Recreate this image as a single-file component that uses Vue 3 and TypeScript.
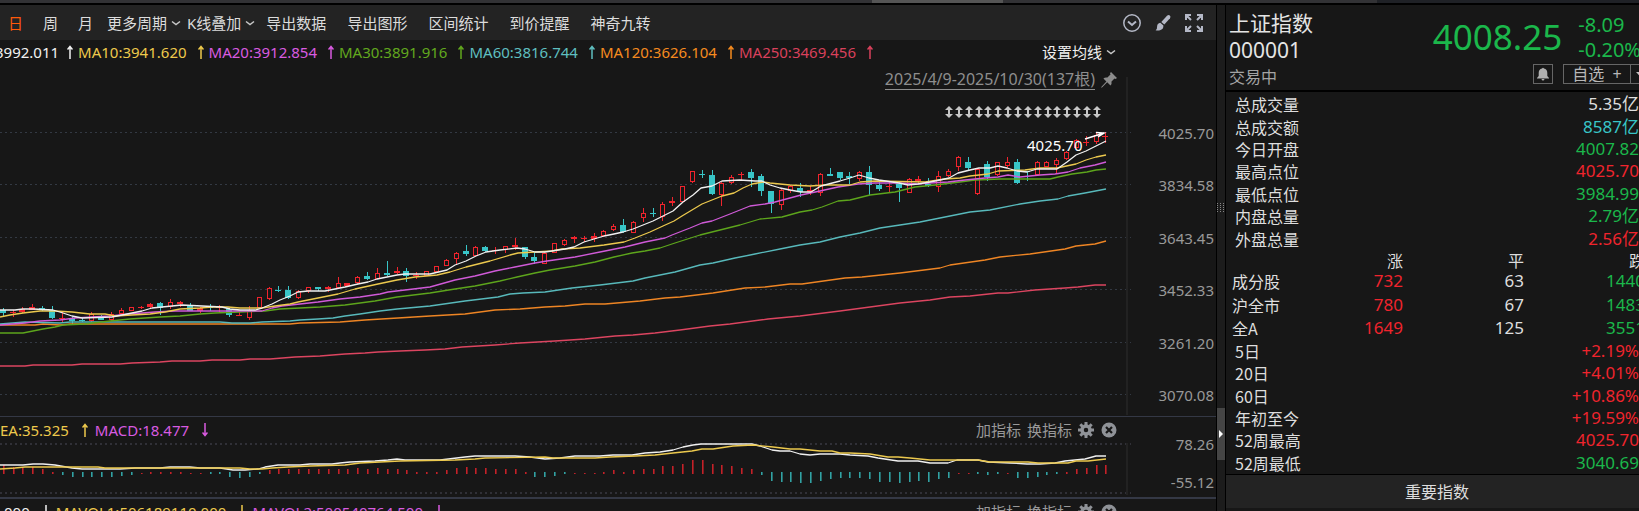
<script setup lang="ts">
import { computed } from 'vue'

type Candle = [kind: 'r' | 'g', top: number, bottom: number, high: number, low: number]
interface Reading { text: string; color: string; up: boolean }
interface Row { label: string; value: string; tone: string }

const periods = ['日', '周', '月']
const menus = ['更多周期', 'K线叠加']
const actions = ['导出数据', '导出图形', '区间统计', '到价提醒', '神奇九转']

const averages: Reading[] = [
  { text: '3992.011', color: '#f2f2f2', up: true },
  { text: 'MA10:3941.620', color: '#eec94c', up: true },
  { text: 'MA20:3912.854', color: '#d95be0', up: true },
  { text: 'MA30:3891.916', color: '#62a81e', up: true },
  { text: 'MA60:3816.744', color: '#5fbfc0', up: true },
  { text: 'MA120:3626.104', color: '#f58b1f', up: true },
  { text: 'MA250:3469.456', color: '#d9415c', up: true },
]
const macdReadings: Reading[] = [
  { text: 'DEA:35.325', color: '#eec94c', up: true },
  { text: 'MACD:18.477', color: '#d95be0', up: false },
]
const volumeReadings: Reading[] = [
  { text: '.000', color: '#f2f2f2', up: false },
  { text: 'MAVOL1:506189110.000', color: '#eec94c', up: false },
  { text: 'MAVOL2:500540764.500', color: '#d95be0', up: false },
]
const priceTicks = ['4025.70', '3834.58', '3643.45', '3452.33', '3261.20', '3070.08']
const gridLines = [133, 185, 238, 290, 343, 395]

const summary: Row[] = [
  { label: '总成交量', value: '5.35亿', tone: 'plain' },
  { label: '总成交额', value: '8587亿', tone: 'cyan' },
  { label: '今日开盘', value: '4007.82', tone: 'down' },
  { label: '最高点位', value: '4025.70', tone: 'up' },
  { label: '最低点位', value: '3984.99', tone: 'down' },
  { label: '内盘总量', value: '2.79亿', tone: 'down' },
  { label: '外盘总量', value: '2.56亿', tone: 'up' },
]
const breadth = [
  ['成分股', '732', '63', '1440'],
  ['沪全市', '780', '67', '1483'],
  ['全A', '1649', '125', '3551'],
]
const returns: Row[] = [
  { label: '5日', value: '+2.19%', tone: 'up' },
  { label: '20日', value: '+4.01%', tone: 'up' },
  { label: '60日', value: '+10.86%', tone: 'up' },
  { label: '年初至今', value: '+19.59%', tone: 'up' },
  { label: '52周最高', value: '4025.70', tone: 'up' },
  { label: '52周最低', value: '3040.69', tone: 'down' },
]

const candles: Candle[] = [
  ['g', 310, 313, 308, 316], ['r', 312, 313, 310, 317], ['r', 309, 312, 307, 313], ['r', 307, 310, 304, 310],
  ['g', 308, 310, 306, 311], ['g', 310, 318, 306, 319], ['r', 318, 319, 312, 323], ['g', 318, 321, 317, 324],
  ['g', 320, 321, 318, 322], ['r', 314, 321, 312, 322], ['g', 316, 320, 315, 320], ['r', 314, 320, 312, 321],
  ['r', 310, 314, 308, 314], ['r', 307, 311, 307, 311], ['r', 307, 308, 306, 309], ['r', 304, 307, 303, 308],
  ['g', 303, 308, 302, 315], ['r', 302, 307, 299, 309], ['r', 302, 304, 301, 307], ['g', 305, 311, 303, 311],
  ['r', 308, 311, 307, 313], ['g', 307, 308, 304, 311], ['r', 307, 308, 305, 313], ['g', 309, 315, 308, 317],
  ['r', 315, 316, 312, 316], ['r', 310, 318, 306, 320], ['r', 297, 308, 297, 308], ['r', 288, 299, 287, 300],
  ['g', 290, 291, 286, 292], ['g', 290, 298, 286, 299], ['r', 291, 298, 290, 299], ['r', 287, 291, 287, 293],
  ['g', 287, 289, 287, 291], ['r', 287, 289, 286, 292], ['r', 283, 288, 277, 289], ['r', 283, 286, 283, 286],
  ['r', 277, 283, 276, 284], ['g', 276, 279, 272, 280], ['r', 273, 279, 268, 279], ['g', 273, 275, 261, 276],
  ['r', 271, 273, 267, 274], ['g', 271, 276, 268, 282], ['r', 275, 276, 272, 279], ['r', 271, 276, 271, 276],
  ['r', 266, 272, 266, 272], ['r', 260, 266, 259, 266], ['r', 253, 259, 252, 264], ['g', 251, 254, 245, 256],
  ['r', 247, 256, 246, 256], ['g', 247, 251, 246, 252], ['r', 250, 251, 247, 254], ['r', 246, 250, 246, 253],
  ['r', 245, 247, 238, 250], ['g', 247, 257, 247, 259], ['g', 257, 261, 252, 264], ['r', 253, 264, 252, 264],
  ['r', 243, 253, 243, 253], ['r', 240, 245, 239, 246], ['r', 237, 239, 236, 243], ['r', 238, 239, 236, 242],
  ['r', 236, 239, 233, 242], ['r', 231, 236, 230, 237], ['r', 226, 230, 224, 231], ['g', 225, 232, 219, 233],
  ['r', 222, 233, 221, 233], ['r', 213, 218, 208, 222], ['g', 213, 214, 208, 217], ['r', 204, 217, 202, 221],
  ['r', 201, 203, 197, 206], ['r', 186, 202, 186, 202], ['r', 171, 182, 171, 183], ['g', 174, 175, 170, 178],
  ['g', 175, 194, 170, 195], ['r', 183, 195, 182, 206], ['r', 177, 183, 175, 184], ['r', 174, 175, 172, 180],
  ['g', 172, 178, 169, 187], ['g', 176, 191, 174, 196], ['g', 191, 204, 191, 213], ['r', 190, 205, 188, 210],
  ['r', 186, 191, 185, 193], ['g', 188, 192, 183, 197], ['r', 190, 192, 186, 195], ['r', 174, 193, 173, 196],
  ['g', 174, 176, 168, 176], ['g', 172, 178, 172, 180], ['g', 176, 178, 172, 184], ['r', 172, 179, 171, 181],
  ['g', 172, 185, 166, 195], ['g', 185, 189, 182, 191], ['r', 186, 187, 182, 193], ['g', 184, 188, 182, 202],
  ['r', 179, 193, 178, 193], ['r', 179, 181, 176, 183], ['g', 184, 186, 178, 187], ['r', 176, 187, 171, 192],
  ['r', 171, 176, 169, 177], ['r', 157, 167, 156, 171], ['g', 162, 168, 157, 171], ['r', 169, 194, 168, 195],
  ['g', 164, 177, 161, 181], ['r', 162, 175, 162, 176], ['r', 162, 166, 157, 168], ['g', 162, 183, 159, 184],
  ['g', 171, 172, 171, 181], ['r', 162, 175, 161, 175], ['r', 162, 167, 161, 167], ['r', 160, 165, 158, 174],
  ['r', 152, 159, 151, 160], ['r', 140, 148, 139, 149], ['r', 142, 143, 136, 146], ['r', 135, 142, 133, 144],
  ['r', 136, 137, 132, 143],
]

const histogram = [
  9, 7, 6, 7, 5, 2, -2, -4, -4, -4, -4, -4, -3, -2, 1, 2, 2, 2, 2, 1, 1, -1, -1, -4, -5, -4, -1, 4, 5, 5, 5, 5, 5, 5, 5, 5, 6, 5,
  6, 5, 5, 4, 2, 2, 2, 4, 6, 7, 6, 6, 5, 5, 5, 2, -4, -4, -3, -1, 1, 1, 1, 2, 4, 2, 4, 5, 5, 8, 8, 10, 14, 14, 10, 9, 8, 6, 5,
  -2, -8, -9, -9, -10, -10, -8, -6, -5, -5, -5, -6, -9, -9, -10, -9, -8, -9, -6, -5, 1, 1, -1, -2, -1, 1, -5, -5, -4, -2, -1, 2,
  5, 6, 9, 9,
]

const slotX = (i: number) => Math.round(2.8 + i * 9.845)
const bars = computed(() =>
  candles.map(([kind, top, bottom, high, low], i) => {
    const thin = bottom - top < 4
    return { kind, top, bottom, high, low, x: slotX(i), hollow: kind === 'r' && !thin }
  }),
)
const columns = computed(() =>
  histogram.map((v, i) => ({ x: slotX(i), y: v > 0 ? 475 - v : 473, h: Math.abs(v) + (v < 0 ? 1 : 0), kind: v > 0 ? 'r' : 'g' })),
)

const maLines = [
  { color: '#dc4560', points: '0,366 25,366 33,365 72,365 82,364 120,364 132,363 160,362 172,361 200,361 212,360 240,360 250,359 270,359 295,357 320,356 345,354 365,353 378,352 400,351 425,350 445,349 462,347 495,345 520,343 555,341 585,339 615,336 633,335 655,333 680,330 710,326 730,324 768,319 800,316 840,311 870,307 900,303 930,300 950,297 970,296 998,293 1008,293 1035,290 1065,288 1078,287 1095,285 1106,285' },
  { color: '#ee8524', points: '0,325 35,325 43,324 60,325 70,324 290,324 300,323 340,322 365,320 398,318 430,316 465,314 495,310 520,309 545,307 565,306 585,304 605,304 640,301 665,298 680,297 713,293 745,288 765,287 790,284 802,284 845,278 862,277 900,273 940,268 950,265 985,260 1000,257 1030,254 1065,249 1076,246 1095,244 1106,241' },
  { color: '#58b9bb', points: '0,324 25,322 60,323 70,322 220,322 232,323 250,323 262,322 290,321 300,320 318,319 333,318 345,316 360,314 380,311 397,309 408,308 430,306 465,301 498,297 510,294 523,293 545,292 572,288 600,285 633,281 645,278 675,272 700,265 713,263 735,258 755,254 780,249 800,245 820,242 840,237 860,233 880,228 900,225 920,222 950,216 970,212 990,210 1020,204 1040,201 1058,199 1068,196 1085,193 1106,189' },
  { color: '#5da51c', points: '0,333 23,333 33,331 43,329 55,327 63,325 85,324 110,321 130,319 145,318 160,317 180,316 200,314 215,313 240,312 265,311 280,309 300,308 320,307 345,305 375,301 397,297 430,293 455,289 475,286 500,281 517,277 535,273 550,270 575,266 595,262 614,257 632,253 645,251 660,248 675,243 700,235 720,230 740,225 760,219 782,217 800,212 812,210 822,207 838,201 850,200 870,195 895,192 915,187 935,185 960,182 975,180 1000,179 1050,179 1058,177 1072,174 1087,172 1096,170 1106,169' },
  { color: '#d05ad8', points: '0,325 25,323 40,321 60,320 75,318 92,317 110,316 130,314 155,312 175,311 262,311 272,308 282,306 300,304 318,302 340,299 360,297 380,294 388,292 405,290 430,287 455,280 475,276 495,271 515,267 535,263 547,261 575,257 600,252 625,247 645,242 665,238 672,235 690,228 702,223 712,221 730,214 750,206 765,204 775,202 790,198 801,195 820,191 838,187 858,184 875,183 900,183 918,184 930,183 948,182 965,180 985,178 998,177 1008,175 1020,177 1040,175 1055,174 1068,172 1080,168 1095,165 1106,162' },
  { color: '#ecc94e', points: '0,317 10,315 23,313 40,311 55,311 72,312 90,314 105,314 115,316 132,315 150,314 165,312 180,309 200,308 212,307 228,307 240,308 262,308 275,306 290,304 298,302 308,300 318,298 338,294 355,289 378,284 397,280 415,277 437,275 450,272 466,267 490,261 510,255 518,253 552,251 562,249 580,248 604,245 624,242 635,238 650,232 663,226 674,221 682,216 692,210 702,204 712,200 722,196 734,193 743,188 752,184 763,182 770,183 790,185 810,186 825,185 850,185 860,182 875,181 925,182 945,179 960,178 970,176 988,174 998,171 1025,170 1040,168 1057,168 1076,164 1086,160 1096,157 1106,155' },
  { color: '#f0f0f0', points: '0,310 15,310 23,309 33,309 53,310 63,313 72,316 82,318 112,317 122,315 142,311 152,308 172,306 182,305 202,306 222,307 230,309 240,310 255,310 262,308 272,304 280,300 290,296 298,292 308,291 325,291 335,289 345,287 358,284 368,282 377,279 387,277 397,275 405,274 430,274 447,270 455,265 466,261 476,256 486,252 500,250 517,248 525,249 535,252 545,252 565,249 574,247 584,242 594,239 604,236 614,234 623,232 633,229 643,225 653,221 663,216 673,211 683,202 693,195 701,188 712,186 722,181 740,180 755,181 762,181 770,185 780,188 790,190 801,192 811,192 821,186 840,181 850,178 859,175 869,178 879,180 899,183 908,185 918,184 930,182 940,180 949,178 958,173 970,170 979,168 990,168 998,166 1007,168 1017,171 1027,172 1037,169 1057,169 1067,162 1076,155 1086,151 1096,146 1106,141' },
]
const difPoints = '0,466 23,466 33,465 43,465 55,466 72,469 82,470 120,470 135,469 160,469 170,468 190,468 200,469 220,469 233,471 245,471 258,470 265,468 278,466 300,466 310,465 332,465 340,464 350,463 375,462 388,461 397,460 405,461 440,461 465,458 475,457 515,457 530,458 545,460 560,459 575,457 600,457 613,456 632,456 645,454 660,453 673,451 683,448 693,446 701,445 752,445 760,447 772,451 780,452 790,452 800,455 810,456 820,455 840,455 850,456 868,457 878,459 898,462 918,462 930,464 948,464 957,461 978,461 988,463 1010,464 1027,465 1040,465 1055,464 1065,462 1085,460 1096,457 1106,457'
const deaPoints = '0,470 15,469 25,468 98,468 105,469 240,469 250,470 262,470 272,469 288,468 310,467 345,466 360,464 380,463 400,462 455,461 475,460 485,459 545,458 553,459 595,459 610,458 635,457 655,456 673,454 692,452 702,450 713,450 733,447 753,446 773,448 790,450 800,450 820,452 832,452 840,454 850,454 870,455 888,458 898,458 910,459 930,461 978,461 990,463 1028,463 1038,464 1068,464 1076,462 1088,462 1106,460'
const marks = Array.from({ length: 16 }, (_, i) => Math.round(949 + i * 9.85))
</script>

<template>
  <div class="terminal">
    <div class="strip"><i class="strip-thumb"></i><i class="strip-end"></i></div>

    <div class="body">
      <main class="chart">
        <nav class="toolbar">
          <div class="periods">
            <button v-for="(p, i) in periods" :key="p" type="button" :class="{ active: i === 0 }">{{ p }}</button>
          </div>
          <div class="menus">
            <button v-for="m in menus" :key="m" type="button" aria-haspopup="menu">
              {{ m }}<svg class="chev" viewBox="0 0 10 6"><path d="M1 1.5 5 4.5 9 1.5" /></svg>
            </button>
          </div>
          <div class="actions">
            <button v-for="a in actions" :key="a" type="button">{{ a }}</button>
          </div>
          <div class="tools">
            <button type="button" aria-label="收起">
              <svg width="20" height="20" viewBox="0 0 20 20" fill="none" stroke="#b4b8c6" stroke-width="1.5"><circle cx="10" cy="10" r="8.2" /><path d="M6 8.5 10 12 14 8.5" stroke-width="2" /></svg>
            </button>
            <button type="button" aria-label="画线">
              <svg width="18" height="18" viewBox="0 0 18 18" fill="#b4b8c6"><path d="M13 1.8Q14.5.3 15.8 1.4T16 4.2L10.3 10.6 7.3 7.9Z" /><path d="M6.3 8.8 9.4 11.6Q9.6 15.5 6 16.3 3.5 16.9 1.6 16.2 3.3 15.3 3.1 12.6 3.2 9.2 6.3 8.8Z" /></svg>
            </button>
            <button type="button" aria-label="全屏">
              <svg width="20" height="20" viewBox="0 0 20 20" fill="none" stroke="#b4b8c6" stroke-width="2"><path d="M2 7V2H7M2 2 7 7M13 2H18V7M18 2 13 7M2 13V18H7M2 18 7 13M18 13V18H13M18 18 13 13" /></svg>
            </button>
          </div>
        </nav>

        <div class="legend averages">
          <span v-for="r in averages" :key="r.text" class="reading" :style="{ color: r.color }">
            {{ r.text }}<svg class="arrow" viewBox="0 0 6 14"><path d="M3 14V2M.5 4.5 3 1.5 5.5 4.5" /></svg>
          </span>
          <button type="button" class="settings" aria-haspopup="menu">
            设置均线<svg class="chev" viewBox="0 0 10 6"><path d="M1 1.5 5 4.5 9 1.5" /></svg>
          </button>
        </div>

        <section class="pane price">
          <div class="plot">
            <svg class="canvas" viewBox="0 66 1131 350" preserveAspectRatio="none">
              <path v-for="y in gridLines" :key="y" class="grid" :d="`M0 ${y - 0.5}H1131`" />
              <path class="rule" d="M1127 77V415" />
              <g v-for="(b, i) in bars" :key="i" :class="b.kind">
                <template v-if="b.hollow">
                  <rect :x="b.x" :y="b.high" width="1" :height="b.top - b.high" />
                  <rect :x="b.x" :y="b.bottom" width="1" :height="b.low - b.bottom" />
                  <rect class="hollow" :x="b.x - 1.5" :y="b.top + 0.5" width="4" :height="b.bottom - b.top - 1" />
                </template>
                <template v-else>
                  <rect :x="b.x" :y="b.high" width="1" :height="b.low - b.high" />
                  <rect :x="b.x - 3" :y="b.top" width="6" :height="b.bottom - b.top" />
                </template>
              </g>
              <polyline v-for="l in maLines" :key="l.color" class="line" :points="l.points" :stroke="l.color" />
              <path v-for="x in marks" :key="x" class="mark" :d="`M${x} 106 ${x + 4} 110H${x + 1}V114H${x + 4}L${x} 118 ${x - 4} 114H${x - 1}V110H${x - 4}Z`" />
              <text x="1027" y="151" class="peak">4025.70</text>
              <path class="pointer" d="M1085 139 1104 133M1096 132.500 1104 133 1098 137" />
            </svg>
            <div class="range">
              <a href="#range">2025/4/9-2025/10/30(137根)</a>
              <svg width="16" height="16" viewBox="0 0 16 16" fill="#8c8c8c"><path d="M10 0 16 6 14.500 7 13.500 6.500 10.500 9.500Q11 12 9.500 13.500L6.200 10.300 1 15.500.2 15.700.5 14.800 5.400 9.500 2.400 6.500Q4 5 6.400 5.500L9.500 2.500 9 1.200Z" /></svg>
            </div>
          </div>
          <div class="axis"><span v-for="t in priceTicks" :key="t">{{ t }}</span></div>
        </section>

        <section class="pane macd">
          <div class="plot">
            <div class="legend sub">
              <span v-for="r in macdReadings" :key="r.text" class="reading" :style="{ color: r.color }">
                {{ r.text }}<svg class="arrow" :class="{ flip: !r.up }" viewBox="0 0 6 14"><path d="M3 14V2M.5 4.5 3 1.5 5.500 4.5" /></svg>
              </span>
              <div class="pane-tools">
                <button type="button">加指标</button>
                <button type="button">换指标</button>
                <button type="button" aria-label="设置">
                  <svg width="16" height="16" viewBox="0 0 16 16"><circle cx="8" cy="8" r="4" fill="none" stroke="#8f9297" stroke-width="3.500" /><path d="M8 0V3M8 13V16M0 8H3M13 8H16M2.300 2.300 4.500 4.500M11.500 11.500 13.700 13.700M2.300 13.700 4.500 11.500M11.500 4.500 13.700 2.300" stroke="#8f9297" stroke-width="3" /></svg>
                </button>
                <button type="button" aria-label="关闭">
                  <svg width="16" height="16" viewBox="0 0 16 16"><circle cx="8" cy="8" r="7.500" fill="#8f9297" /><path d="M5 5 11 11M11 5 5 11" stroke="#171717" stroke-width="2.200" /></svg>
                </button>
              </div>
            </div>
            <svg class="canvas" viewBox="0 443 1131 55" preserveAspectRatio="none">
              <path class="grid faint" d="M0 445H1131M0 494H1131" />
              <path class="rule" d="M1127 444V496" />
              <rect v-for="(c, i) in columns" :key="i" :class="['col', c.kind]" :x="c.x" :y="c.y" width="1.600" :height="c.h" />
              <polyline class="line" :points="difPoints" stroke="#f0f0f0" />
              <polyline class="line" :points="deaPoints" stroke="#ecc94e" />
            </svg>
          </div>
          <div class="axis"><span>78.26</span><span>-55.12</span></div>
        </section>

        <section class="pane volume">
          <div class="plot">
            <div class="legend">
              <span v-for="r in volumeReadings" :key="r.text" class="reading" :style="{ color: r.color }">
                {{ r.text }}<svg class="arrow" :class="{ flip: !r.up }" viewBox="0 0 6 14"><path d="M3 14V2M.5 4.500 3 1.500 5.500 4.500" /></svg>
              </span>
              <div class="pane-tools">
                <button type="button">加指标</button>
                <button type="button">换指标</button>
                <button type="button" aria-label="设置">
                  <svg width="16" height="16" viewBox="0 0 16 16"><circle cx="8" cy="8" r="4" fill="none" stroke="#8f9297" stroke-width="3.500" /><path d="M8 0V3M8 13V16M0 8H3M13 8H16M2.300 2.300 4.500 4.500M11.500 11.500 13.700 13.700M2.300 13.700 4.500 11.500M11.500 4.500 13.700 2.300" stroke="#8f9297" stroke-width="3" /></svg>
                </button>
                <button type="button" aria-label="关闭">
                  <svg width="16" height="16" viewBox="0 0 16 16"><circle cx="8" cy="8" r="7.500" fill="#8f9297" /><path d="M5 5 11 11M11 5 5 11" stroke="#171717" stroke-width="2.200" /></svg>
                </button>
              </div>
            </div>
          </div>
          <div class="axis"></div>
        </section>
      </main>

      <div class="splitter">
        <svg class="grip" viewBox="0 0 7 10"><path d="M.5 0V10M3.500 0V10M6.500 0V10" /></svg>
        <button type="button" class="fold" aria-label="收起侧栏"><svg width="4" height="8" viewBox="0 0 4 8"><path d="M0 0 4 4 0 8Z" fill="#fff" /></svg></button>
      </div>

      <aside class="quote">
        <header class="head">
          <div class="identity">
            <h1>上证指数</h1>
            <span class="code">000001</span>
            <span class="status">交易中</span>
          </div>
          <div class="figures">
            <div class="last">
              <strong>4008.25</strong>
              <div class="change"><span>-8.09</span><span>-0.20%</span></div>
            </div>
            <div class="follow">
              <button type="button" class="bell" aria-label="提醒">
                <svg width="14" height="14" viewBox="0 0 14 14" fill="#b0b0b0"><path d="M6 1.500Q7 0 8 1.500 11.300 2.300 11.300 6V9L13 11V11.500H1V11L2.700 9V6Q2.700 2.300 6 1.500ZM5.500 12H8.500Q8.300 13.500 7 13.500T5.500 12Z" /></svg>
              </button>
              <button type="button" class="add">自选&nbsp; +</button>
              <button type="button" class="more" aria-label="更多"><svg width="9" height="5" viewBox="0 0 9 5"><path d="M0 0H9L4.500 5Z" fill="#c0c0c0" /></svg></button>
            </div>
          </div>
        </header>

        <div class="stats">
          <dl class="rows seven">
            <div v-for="r in summary" :key="r.label"><dt>{{ r.label }}</dt><dd :class="r.tone">{{ r.value }}</dd></div>
          </dl>
          <div class="breadth">
            <table>
              <thead><tr><th></th><th scope="col">涨</th><th scope="col">平</th><th scope="col">跌</th></tr></thead>
              <tbody>
                <tr v-for="b in breadth" :key="b[0]">
                  <th scope="row">{{ b[0] }}</th><td class="up">{{ b[1] }}</td><td>{{ b[2] }}</td><td class="down">{{ b[3] }}</td>
                </tr>
              </tbody>
            </table>
          </div>
          <dl class="rows six">
            <div v-for="r in returns" :key="r.label"><dt>{{ r.label }}</dt><dd :class="r.tone">{{ r.value }}</dd></div>
          </dl>
        </div>
        <button type="button" class="indices">重要指数</button>
      </aside>
    </div>
  </div>
</template>

<style>
body { margin: 0; background: #171717; }
</style>

<style scoped>
.terminal {
  display: flex;
  flex-direction: column;
  height: 100vh;
  overflow: hidden;
  background: #171717;
  color: #dcdcdc;
  font: 15px/20px "Noto Sans", "Noto Sans CJK SC", sans-serif;
}
button {
  margin: 0;
  padding: 0;
  border: 0;
  background: none;
  color: inherit;
  font: inherit;
  white-space: nowrap;
  cursor: pointer;
}
svg { display: block; flex: none; }

.strip { display: flex; height: 3px; background: #323235; border-bottom: 2px solid #000; flex: none; }
.strip-thumb { width: 8%; margin-left: 53.2%; background: #555; }
.strip-end { width: 16%; margin-left: auto; background: #1f2126; }
.body { display: flex; flex: 1; min-height: 0; }

.chart { flex: 1; min-width: 0; display: flex; flex-direction: column; }
.toolbar { display: flex; align-items: center; height: 35px; flex: none; padding: 0 12px 0 8px; background: #232323; }
.periods, .menus, .actions, .tools { display: flex; align-items: center; }
.periods { gap: 20px; }
.menus { gap: 6px; margin-left: 14px; }
.actions { gap: 21px; margin-left: 11px; }
.tools { gap: 12px; margin-left: auto; }
.active { color: #ff5a0a; }
.menus button, .settings { display: flex; align-items: center; gap: 4px; }
.chev { width: 10px; height: 6px; fill: none; stroke: #c8c8c8; stroke-width: 1.5; }

.legend { display: flex; align-items: center; height: 25px; flex: none; overflow: hidden; white-space: nowrap; }
.averages { height: 24px; padding: 0 100px 2px 0; }
.averages .reading:first-child { margin-left: -5px; }
.averages .reading:first-child .arrow { margin-left: 8px; }
.reading { display: flex; align-items: center; flex: none; padding-right: 5px; }
.arrow { width: 6px; height: 14px; margin-left: 11px; fill: none; stroke: currentColor; stroke-width: 1.5; }
.macd .reading, .volume .reading { padding-right: 7px; }
.macd .arrow, .volume .arrow { margin-left: 13px; }
.sub .reading:first-child { margin-left: -11px; }
.flip { transform: rotate(180deg); }
.settings { margin-left: auto; color: #f0f0f0; }

.pane { display: flex; flex: none; }
.plot { position: relative; flex: 1; min-width: 0; }
.canvas { width: 100%; }
.price { border-bottom: 1px solid #343845; }
.price .canvas { height: 350px; }
.macd { border-bottom: 2px solid #343845; }
.macd .canvas { height: 55px; }
.axis { display: flex; flex-direction: column; width: 85px; padding-right: 2px; box-sizing: border-box; color: #999; text-align: right; }
.price .axis { justify-content: space-between; padding-top: 57px; padding-bottom: 11px; }
.macd .axis { gap: 18px; padding-top: 17px; }

.grid { stroke: #333943; stroke-width: 1; stroke-dasharray: 2 3; fill: none; }
.faint { stroke: #303037; stroke-width: 2; }
.rule { stroke: #222; stroke-width: 2; }
.line { fill: none; stroke-width: 1.3; stroke-linejoin: round; }
.r { fill: #f0242d; }
.g { fill: #38c5c7; }
.hollow { fill: #171717; stroke: #f0242d; stroke-width: 1; }
.col { opacity: 0.8; }
.mark { fill: #c6c6c6; }
.peak { fill: #fff; font-size: 15px; }
.pointer { fill: none; stroke: #fff; stroke-width: 1.5; }
.range { position: absolute; top: 3px; right: 14px; display: flex; align-items: center; gap: 6px; font-size: 16px; line-height: 20px; }
.range a { color: #8e8e8e; text-decoration: none; border-bottom: 1px solid #8e8e8e; }

.pane-tools { display: flex; align-items: center; gap: 6px; margin-left: auto; padding-right: 14px; color: #999; }
.pane-tools button:nth-child(3) { margin-right: 1px; }

.splitter { position: relative; width: 8px; flex: none; background: #1c1c1c; border-left: 1px solid #000; border-right: 1px solid #000; }
.grip { position: absolute; top: 198px; left: 0; width: 7px; height: 10px; }
.grip path { stroke: #888; stroke-dasharray: 1 1; }
.fold { position: absolute; top: 403px; left: 0; width: 8px; height: 52px; padding-left: 2px; background: #454545; }

.quote { display: flex; flex-direction: column; width: 413px; flex: none; overflow: hidden; }
.head { display: flex; justify-content: space-between; height: 85px; flex: none; padding-left: 3px; border-bottom: 2px solid #000; }
.identity { display: flex; flex-direction: column; padding-top: 4px; color: #e4e4e4; }
h1 { margin: 0; font-size: 21px; font-weight: 400; line-height: 28px; }
.code { font-size: 21px; line-height: 26px; }
.status { color: #a4a4a4; font-size: 16px; line-height: 28px; }
.figures { display: flex; flex-direction: column; align-items: flex-end; gap: 2px; padding-top: 7px; color: #1bb74b; }
.last { display: flex; align-items: center; gap: 16px; margin-right: -2px; }
.last strong { font-size: 35px; font-weight: 400; line-height: 50px; }
.change { display: flex; flex-direction: column; font-size: 20px; line-height: 25px; }
.follow { display: flex; margin-right: -12px; }
.follow button { display: flex; align-items: center; justify-content: center; height: 20px; box-sizing: border-box; border: 1px solid #666; color: #b8b8b8; font-size: 16px; }
.follow .bell { width: 20px; margin-right: 10px; }
.follow .add { width: 68px; }
.follow .more { width: 20px; border-left: 0; }

.stats { display: flex; flex-direction: column; flex: 1; min-height: 0; padding-top: 1px; font-size: 16px; color: #dedede; }
.rows { display: flex; flex-direction: column; margin: 0; padding-left: 9px; min-height: 0; }
.rows div { display: flex; flex: 1; align-items: center; justify-content: space-between; min-height: 0; }
.seven { flex: 7; }
.six { flex: 6; }
.breadth { flex: 4; min-height: 0; }
dt, .breadth th { font-family: "Noto Sans CJK SC", sans-serif; }
dd { margin: 0; font-size: 17px; }
dd, td { font-family: "Noto Sans", "Noto Sans CJK SC", sans-serif; }
table { width: calc(100% + 6px); height: 100%; border-collapse: collapse; table-layout: fixed; }
th, td { width: 121px; padding: 0; font-weight: 400; text-align: right; }
td { font-size: 17px; }
th:first-child { width: auto; padding-left: 6px; text-align: left; }
.up { color: #f0242d; }
.down { color: #1bb74b; }
.cyan { color: #38c5c7; }
.indices { width: calc(100% + 9px); height: 34px; flex: none; margin-bottom: 3px; background: #232323; border-top: 1px solid #000; font-size: 16px; color: #dedede; }
</style>
